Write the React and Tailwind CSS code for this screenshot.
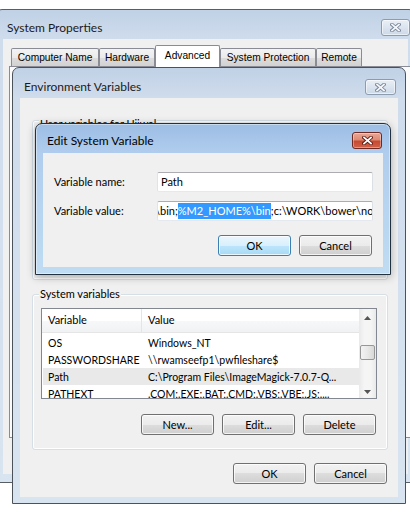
import React from "react";

function XGlyph({ outline, fill }) {
  return (
    <svg width="11" height="9" viewBox="0 0 11 9">
      <path d="M2 1.5 L9 7.5 M9 1.5 L2 7.5" stroke={outline} strokeWidth="3.6" strokeLinecap="square" fill="none" />
      <path d="M2 1.5 L9 7.5 M9 1.5 L2 7.5" stroke={fill} strokeWidth="1.7" strokeLinecap="square" fill="none" />
    </svg>
  );
}

function InactiveClose({ className }) {
  return (
    <div
      className={
        "flex items-center justify-center rounded-[3px] border border-[#8c9bad] bg-[linear-gradient(to_bottom,#e9eff6_0%,#dbe4ef_50%,#ccd9e8_100%)] shadow-[inset_0_0_0_1px_rgba(255,255,255,0.55)] " +
        className
      }
    >
      <XGlyph outline="#7a8798" fill="#f4f7fb" />
    </div>
  );
}

function ActiveClose() {
  return (
    <div className="flex items-center justify-center w-[30px] h-[17px] rounded-[3px] border border-[#6e2a22] bg-[linear-gradient(to_bottom,#eaa796_0%,#dd8a74_45%,#c8482f_55%,#d0634a_100%)] shadow-[inset_0_0_0_1px_rgba(255,255,255,0.35)]">
      <XGlyph outline="#5b1d15" fill="#ffffff" />
    </div>
  );
}

function Btn({ children, def = false, className = "" }) {
  return (
    <div
      className={
        (def
          ? "border-[#3c7fb1] bg-[linear-gradient(to_bottom,#eaf6fd_0%,#d9f0fc_50%,#bee6fd_50%,#a7d9f5_100%)] "
          : "border-[#707070] bg-[linear-gradient(to_bottom,#f2f2f2_0%,#ebebeb_50%,#dddddd_50%,#cfcfcf_100%)] ") +
        "flex items-center justify-center w-[73px] h-[21px] rounded-[3px] border shadow-[inset_0_0_0_1px_rgba(255,255,255,0.75)] text-[11px] leading-[14px] text-black " +
        className
      }
    >
      {children}
    </div>
  );
}

function Tab({ children, selected = false, className = "" }) {
  return (
    <div
      className={
        (selected
          ? "relative z-10 -mb-px h-[22px] bg-white "
          : "h-[18px] bg-[linear-gradient(to_bottom,#f3f3f3_0%,#ebebeb_50%,#dddddd_50%,#d2d2d2_100%)] ") +
        "flex items-center justify-center whitespace-nowrap border border-b-0 border-[#898c95] rounded-t-[2px] font-['Liberation_Sans',sans-serif] text-[10.2px] leading-[13px] text-black " +
        className
      }
    >
      {children}
    </div>
  );
}

function Input({ children }) {
  return (
    <div className="w-[216px] h-[20px] flex items-center overflow-hidden whitespace-nowrap rounded-[2px] border border-[#abadb3] border-l-[#e2e3ea] border-r-[#dbdfe6] border-b-[#e3e9ef] bg-white pl-[3px] text-[11px] text-black">
      {children}
    </div>
  );
}

const rows = [
  ["OS", "Windows_NT", false],
  ["PASSWORDSHARE", "\\\\rwamseefp1\\pwfileshare$", false],
  ["Path", "C:\\Program Files\\ImageMagick-7.0.7-Q...", true],
  ["PATHEXT", ".COM;.EXE;.BAT;.CMD;.VBS;.VBE;.JS;....", false],
];

export default function App() {
  return (
    <div className="relative w-[410px] h-[512px] overflow-hidden bg-white font-['Lato',sans-serif] text-black">
      {/* System Properties window */}
      <div className="absolute left-[-5px] top-[9px] w-[421px] h-[474px] flex flex-col rounded-t-[7px] border border-[#585e66] bg-[linear-gradient(to_bottom,#c0d1e6_0px,#cfdcec_29px,#d9e4f1_100%)]">
        <div className="h-[29px] flex items-start justify-between pl-[11px] pr-[5px] pt-[9px]">
          <div className="mt-[1px] text-[12px] leading-[16px] text-[#1b1b1b]">System Properties</div>
          <InactiveClose className="w-[29px] h-[17px]" />
        </div>
        <div className="flex-1 px-[7px] pb-[8px]">
          <div className="h-full bg-[#f0f0f0] flex flex-col">
            <div className="mt-[7px] ml-[8px] h-[20px] flex items-end">
              <Tab className="w-[88px]">Computer Name</Tab>
              <Tab className="w-[56px]">Hardware</Tab>
              <Tab selected className="w-[65px] items-start pt-[3px]">Advanced</Tab>
              <Tab className="w-[96px]">System Protection</Tab>
              <Tab className="w-[46px]">Remote</Tab>
            </div>
            <div className="ml-[6px] w-[405px] h-[372px] border border-[#898c95] bg-[#fbfbfb]" />
          </div>
        </div>
      </div>

      {/* Environment Variables window */}
      <div className="absolute left-[12px] top-[67px] w-[394px] h-[437px] flex flex-col rounded-t-[7px] border border-[#4c525a] bg-[linear-gradient(to_bottom,#c0d1e6_0px,#cfdcec_30px,#d9e4f1_100%)]">
        <div className="h-[30px] flex items-start justify-between pl-[11px] pr-[9px] pt-[11px]">
          <div className="text-[12px] leading-[16px] text-[#1b1b1b]">Environment Variables</div>
          <InactiveClose className="w-[31px] h-[16px]" />
        </div>
        <div className="flex-1 px-[7px] pb-[6px]">
          <div className="h-full bg-[#f0f0f0] flex flex-col">
            {/* User variables group (mostly hidden) */}
            <div className="relative ml-[12px] mt-[22px] w-[356px] h-[160px] rounded-[3px] border border-[#d5dfe5] shadow-[inset_0_0_0_1px_#ffffff]">
              <div className="absolute left-[6px] top-[-4px] px-[1px] bg-[#f0f0f0] text-[11px] leading-[14px]">
                User variables for Ujjwal
              </div>
            </div>
            {/* System variables group */}
            <div className="relative ml-[12px] mt-[14px] w-[356px] h-[156px] rounded-[3px] border border-[#d5dfe5] shadow-[inset_0_0_0_1px_#ffffff] flex flex-col items-start pt-[13px] pl-[8px]">
              <div className="absolute left-[6px] top-[-8px] px-[1px] bg-[#f0f0f0] text-[11px] leading-[14px]">
                System variables
              </div>
              <div className="w-[336px] h-[91px] flex border border-[#828790] bg-white overflow-hidden">
                <div className="w-[317px] flex flex-col">
                  <div className="h-[24px] shrink-0 flex border-b border-[#e5e5e5] bg-[linear-gradient(to_bottom,#ffffff_0%,#ffffff_50%,#f7f8fa_50%,#f1f2f4_100%)] text-[11px]">
                    <div className="w-[100px] pl-[6px] flex items-center border-r border-[#e5e5e5]">Variable</div>
                    <div className="flex-1 pl-[6px] flex items-center">Value</div>
                  </div>
                  <div className="pt-[1px] flex flex-col">
                    {rows.map(([k, v, sel]) => (
                      <div
                        key={k}
                        className={
                          (sel ? "bg-[#e9e9e9] " : "") +
                          "h-[17px] shrink-0 ml-[1px] flex items-center whitespace-nowrap text-[10.5px] leading-[14px]"
                        }
                      >
                        <div className="w-[99px] pl-[5px]">{k}</div>
                        <div className="pl-[6px]">{v}</div>
                      </div>
                    ))}
                  </div>
                </div>
                <div className="w-[17px] flex flex-col bg-[linear-gradient(to_right,#e9e9e9,#f5f5f5_30%,#f5f5f5_70%,#e9e9e9)]">
                  <div className="h-[17px] flex items-center justify-center">
                    <svg width="7" height="4" viewBox="0 0 7 4">
                      <polygon points="0,4 3.5,0 7,4" fill="#555" />
                    </svg>
                  </div>
                  <div className="flex-1 pt-[19px]">
                    <div className="mx-[1px] h-[15px] rounded-[2px] border border-[#979797] bg-[linear-gradient(to_right,#f3f3f3,#e8e8e8_50%,#d8d8d8)]" />
                  </div>
                  <div className="h-[13px] flex items-center justify-center">
                    <svg width="7" height="4" viewBox="0 0 7 4">
                      <polygon points="0,0 7,0 3.5,4" fill="#555" />
                    </svg>
                  </div>
                </div>
              </div>
              <div className="mt-[15px] w-full flex justify-end gap-[8px] pr-[11px]">
                <Btn>New...</Btn>
                <Btn>Edit...</Btn>
                <Btn>Delete</Btn>
              </div>
            </div>
            <div className="mt-[13px] flex justify-end gap-[8px] pr-[11px]">
              <Btn>OK</Btn>
              <Btn>Cancel</Btn>
            </div>
          </div>
        </div>
      </div>

      {/* Edit System Variable window (active) */}
      <div className="absolute left-[35px] top-[123px] w-[356px] h-[152px] flex flex-col rounded-t-[7px] border border-[#23303d] bg-[linear-gradient(to_bottom,#9dbde3_0px,#b0cdee_29px,#bfdcf3_100%)] shadow-[0_2px_8px_rgba(0,0,0,0.3),inset_0_0_0_1px_rgba(255,255,255,0.45)]">
        <div className="h-[29px] flex items-start justify-between pl-[11px] pr-[8px] pt-[8px]">
          <div className="mt-[1px] text-[12px] leading-[16px] text-black">Edit System Variable</div>
          <ActiveClose />
        </div>
        <div className="flex-1 px-[7px] pb-[7px]">
          <div className="h-full bg-[#f0f0f0] flex flex-col pt-[19px] pl-[11px]">
            <div className="h-[20px] flex items-center">
              <div className="w-[103px] text-[11px]">Variable name:</div>
              <Input>Path</Input>
            </div>
            <div className="mt-[9px] h-[20px] flex items-center">
              <div className="w-[103px] text-[11px]">Variable value:</div>
              <Input>
                <span className="ml-[-6px]">\bin;</span>
                <span className="bg-[#3399ff] text-white leading-[16px]">%M2_HOME%\bin</span>
                <span>;c:\WORK\bower\node_modules</span>
              </Input>
            </div>
            <div className="mt-[14px] flex justify-end gap-[8px] pr-[11px]">
              <Btn def>OK</Btn>
              <Btn>Cancel</Btn>
            </div>
          </div>
        </div>
      </div>
    </div>
  );
}
